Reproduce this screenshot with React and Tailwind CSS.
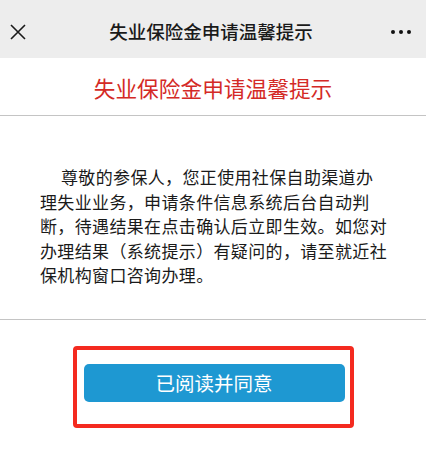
import React from "react";

const App = () => {
  return (
    <div className="w-[426px] h-[451px] bg-white overflow-hidden flex flex-col font-['Noto_Sans_CJK_SC','Noto_Sans',sans-serif]">
      {/* 顶部导航栏 */}
      <div className="h-[58px] bg-[#ededed] flex items-center shrink-0">
        <div className="w-[60px] pl-[10px] pt-[5px] flex items-center">
          <svg width="16" height="16" viewBox="0 0 16 16" className="text-[#1a1a1a]">
            <path d="M1 1 L15 15 M15 1 L1 15" stroke="currentColor" strokeWidth="1.6" fill="none" />
          </svg>
        </div>
        <div className="flex-1 flex justify-center pr-[4px] pt-[4px]">
          <span className="text-[18.5px] font-medium text-[#1a1a1a] leading-none">失业保险金申请温馨提示</span>
        </div>
        <div className="w-[60px] flex items-center justify-end gap-[4px] pr-[15px] pt-[6px]">
          <span className="w-[4px] h-[4px] rounded-full bg-[#111]"></span>
          <span className="w-[4px] h-[4px] rounded-full bg-[#111]"></span>
          <span className="w-[4px] h-[4px] rounded-full bg-[#111]"></span>
        </div>
      </div>

      {/* 红色标题 */}
      <div className="h-[58px] flex items-center justify-center border-b border-[#c4c4c4] shrink-0">
        <h1 className="text-[21.7px] text-[#d42a26] leading-none pt-[2px]">失业保险金申请温馨提示</h1>
      </div>

      {/* 正文 */}
      <div className="pl-[40px] pr-[37px] pt-[49px] pb-[31px] border-b border-[#c4c4c4] shrink-0">
        <p className="text-[17px] leading-[24.6px] tracking-[0.35px] text-[#1a1a1a] indent-[21px]">
          尊敬的参保人，您正使用社保自助渠道办理失业业务，申请条件信息系统后台自动判断，待遇结果在点击确认后立即生效。如您对办理结果（系统提示）有疑问的，请至就近社保机构窗口咨询办理。
        </p>
      </div>

      {/* 按钮（红框标注） */}
      <div className="flex justify-center pt-[26px]">
        <div className="border-4 border-[#f42a1f] rounded-[4px] pl-[7px] pr-[5px] pt-[14px] pb-[22px]">
          <button className="w-[261px] h-[38px] rounded-[5px] bg-[#1e98d2] text-white text-[19.5px] leading-none">
            已阅读并同意
          </button>
        </div>
      </div>
    </div>
  );
};

export default App;
